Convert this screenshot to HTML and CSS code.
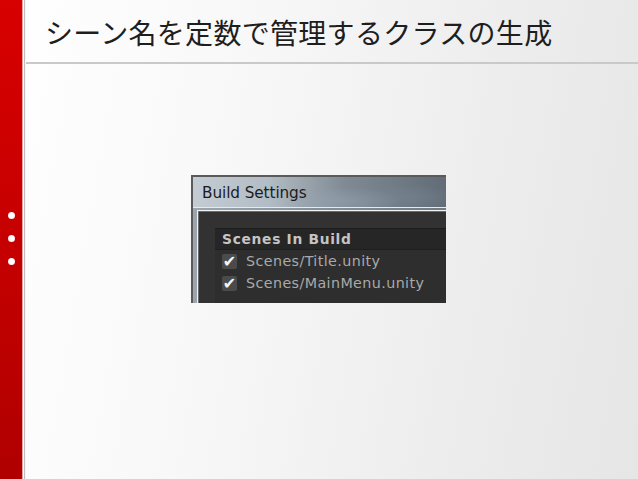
FILE: index.html
```html
<!DOCTYPE html>
<html lang="ja">
<head>
<meta charset="utf-8">
<link rel="stylesheet" href="styles.css">
</head>
<body>
<div class="slide">
  <aside class="rail">
    <div class="dots">
      <span class="dot"></span>
      <span class="dot"></span>
      <span class="dot"></span>
    </div>
  </aside>
  <div class="edge"></div>
  <main class="main">
    <header class="head">
      <h1 class="title">シーン名を定数で管理するクラスの生成</h1>
    </header>
    <section class="content">
      <div class="shot">
        <div class="titlebar">Build Settings</div>
        <div class="frame">
          <div class="panel">
            <div class="list">
              <div class="list-head">Scenes In Build</div>
              <div class="row"><span class="check">✔</span><span class="scene">Scenes/Title.unity</span></div>
              <div class="row"><span class="check">✔</span><span class="scene">Scenes/MainMenu.unity</span></div>
            </div>
          </div>
        </div>
      </div>
    </section>
  </main>
</div>
</body>
</html>
```

FILE: styles.css
```css
html, body {
  margin: 0;
  padding: 0;
}
body {
  width: 638px;
  height: 479px;
  overflow: hidden;
  font-family: "Noto Sans CJK JP", "Noto Sans", sans-serif;
}
.slide {
  display: flex;
  width: 638px;
  height: 479px;
  background: linear-gradient(100deg, #ffffff 0%, #f8f8f8 35%, #ececec 75%, #e6e6e6 100%);
}
.rail {
  width: 22px;
  flex: none;
  background: linear-gradient(180deg, #d80000 0%, #c60000 50%, #b00000 100%);
  display: flex;
  flex-direction: column;
}
.dots {
  margin-top: 212px;
  display: flex;
  flex-direction: column;
  align-items: center;
  gap: 16px;
}
.dot {
  width: 7px;
  height: 7px;
  border-radius: 50%;
  background: radial-gradient(circle, #ffffff 50%, #f3c4c4 100%);
}
.edge {
  width: 4px;
  flex: none;
  background: linear-gradient(90deg, #e8a0a0 0 1px, #ffffff 1px 2px, #bfbfbf 2px 3px, #f4f4f4 3px 4px);
}
.main {
  flex: 1;
  display: flex;
  flex-direction: column;
}
.head {
  border-bottom: 2px solid #c9c9c9;
  box-sizing: border-box;
  height: 64px;
  padding-left: 19px;
  display: flex;
  align-items: center;
}
.title {
  margin: 0;
  font-weight: 400;
  font-size: 28px;
  letter-spacing: 0.3px;
  color: #1e1e1e;
  line-height: 1;
  padding-top: 2px;
}
.content {
  flex: 1;
  padding-top: 111px;
  padding-left: 165px;
}
.shot {
  width: 255px;
  height: 128px;
  box-sizing: border-box;
  border-left: 2px solid #5a5a5a;
  border-top: 2px solid #5a5a5a;
  display: flex;
  flex-direction: column;
  overflow: hidden;
  background: #8e98a2;
}
.titlebar {
  height: 31px;
  flex: none;
  box-sizing: border-box;
  padding: 7px 0 0 9px;
  font-family: "DejaVu Sans", Verdana, sans-serif;
  font-size: 15.3px;
  letter-spacing: -0.1px;
  color: #1c1c1c;
  background:
    radial-gradient(ellipse 60px 14px at 150px 24px, rgba(150,165,178,0.55), rgba(150,165,178,0)),
    radial-gradient(ellipse 50px 12px at 215px 20px, rgba(120,135,148,0.5), rgba(120,135,148,0)),
    linear-gradient(90deg, #c4ccd3 0%, #b2bcc4 30%, #7f8a94 60%, #616c77 100%);
  border-bottom: 1px solid #e6eaee;
}
.frame {
  flex: 1;
  display: flex;
  padding: 2px 0 0 4px;
  background: linear-gradient(90deg, #9ba5ae 0%, #6f7982 100%);
}
.panel {
  flex: 1;
  border-left: 1px solid #f2f2f2;
  border-top: 1px solid #f2f2f2;
  box-shadow: inset 1px 1px 0 #6a6a6a;
  background: #323232;
  padding: 17px 0 0 17px;
  display: flex;
}
.list {
  flex: 1;
  background: #2e2e2e;
  display: flex;
  flex-direction: column;
}
.list-head {
  height: 22px;
  box-sizing: border-box;
  padding: 2px 0 0 7px;
  background: #262626;
  border-top: 1px solid #1c1c1c;
  border-bottom: 1px solid #1f1f1f;
  font-family: "DejaVu Sans", Verdana, sans-serif;
  font-weight: 700;
  font-size: 13.8px;
  letter-spacing: 0.7px;
  color: #c4c4c4;
}
.row {
  height: 22px;
  display: flex;
  align-items: center;
  padding-left: 7px;
  gap: 9px;
}
.check {
  width: 15px;
  height: 15px;
  flex: none;
  background: #4b4b4b;
  border-radius: 2px;
  color: #f4f4f4;
  font-family: "DejaVu Sans", sans-serif;
  font-size: 16px;
  line-height: 15px;
  text-align: center;
  font-weight: 700;
}
.scene {
  font-family: "DejaVu Sans", Verdana, sans-serif;
  font-size: 14.3px;
  letter-spacing: 0.4px;
  color: #a9a9a9;
}
```
